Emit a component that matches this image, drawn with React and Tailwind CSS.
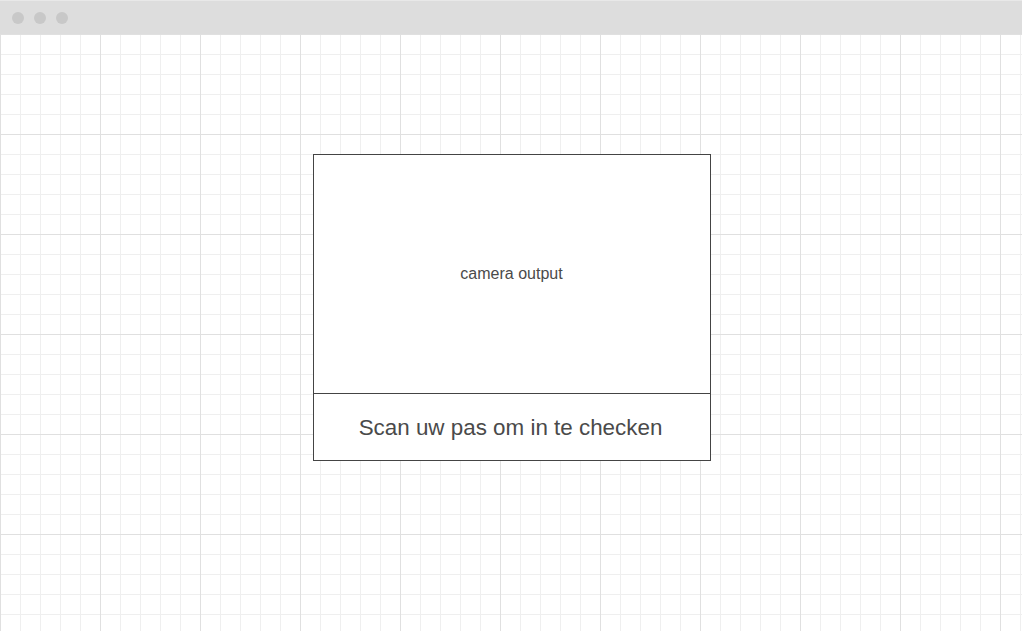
import React from 'react';

const App = () => {
  return (
    <div className="w-[1022px] h-[631px] flex flex-col overflow-hidden bg-white font-['Liberation_Sans',Arial,sans-serif]">
      {/* Window chrome */}
      <div className="h-[34px] shrink-0 bg-[#dddddd] border-t border-[#e8e8e8] flex items-center gap-[10px] pl-[12px]">
        <span className="w-[12px] h-[12px] rounded-full bg-[#c8c8c8]" />
        <span className="w-[12px] h-[12px] rounded-full bg-[#c8c8c8]" />
        <span className="w-[12px] h-[12px] rounded-full bg-[#c8c8c8]" />
      </div>

      {/* Canvas with grid */}
      <div className="flex-1 flex justify-center pt-[120px] bg-white bg-[linear-gradient(to_right,#e0e0e0_1px,transparent_1px),linear-gradient(to_bottom,#e0e0e0_1px,transparent_1px),linear-gradient(to_right,#efefef_1px,transparent_1px),linear-gradient(to_bottom,#efefef_1px,transparent_1px)] bg-[size:100px_100px,100px_100px,20px_20px,20px_20px]">
        <div className="w-[398px] h-[307px] ml-[1px] border border-[#444444] bg-white flex flex-col">
          <div className="h-[238px] flex items-center justify-center text-[16px] text-[#4a4a4a]">
            camera output
          </div>
          <div className="flex-1 border-t border-[#444444] flex items-center justify-center pt-[2px] pr-[2px] text-[22.4px] text-[#4a4a4a]">
            Scan uw pas om in te checken
          </div>
        </div>
      </div>
    </div>
  );
};

export default App;
